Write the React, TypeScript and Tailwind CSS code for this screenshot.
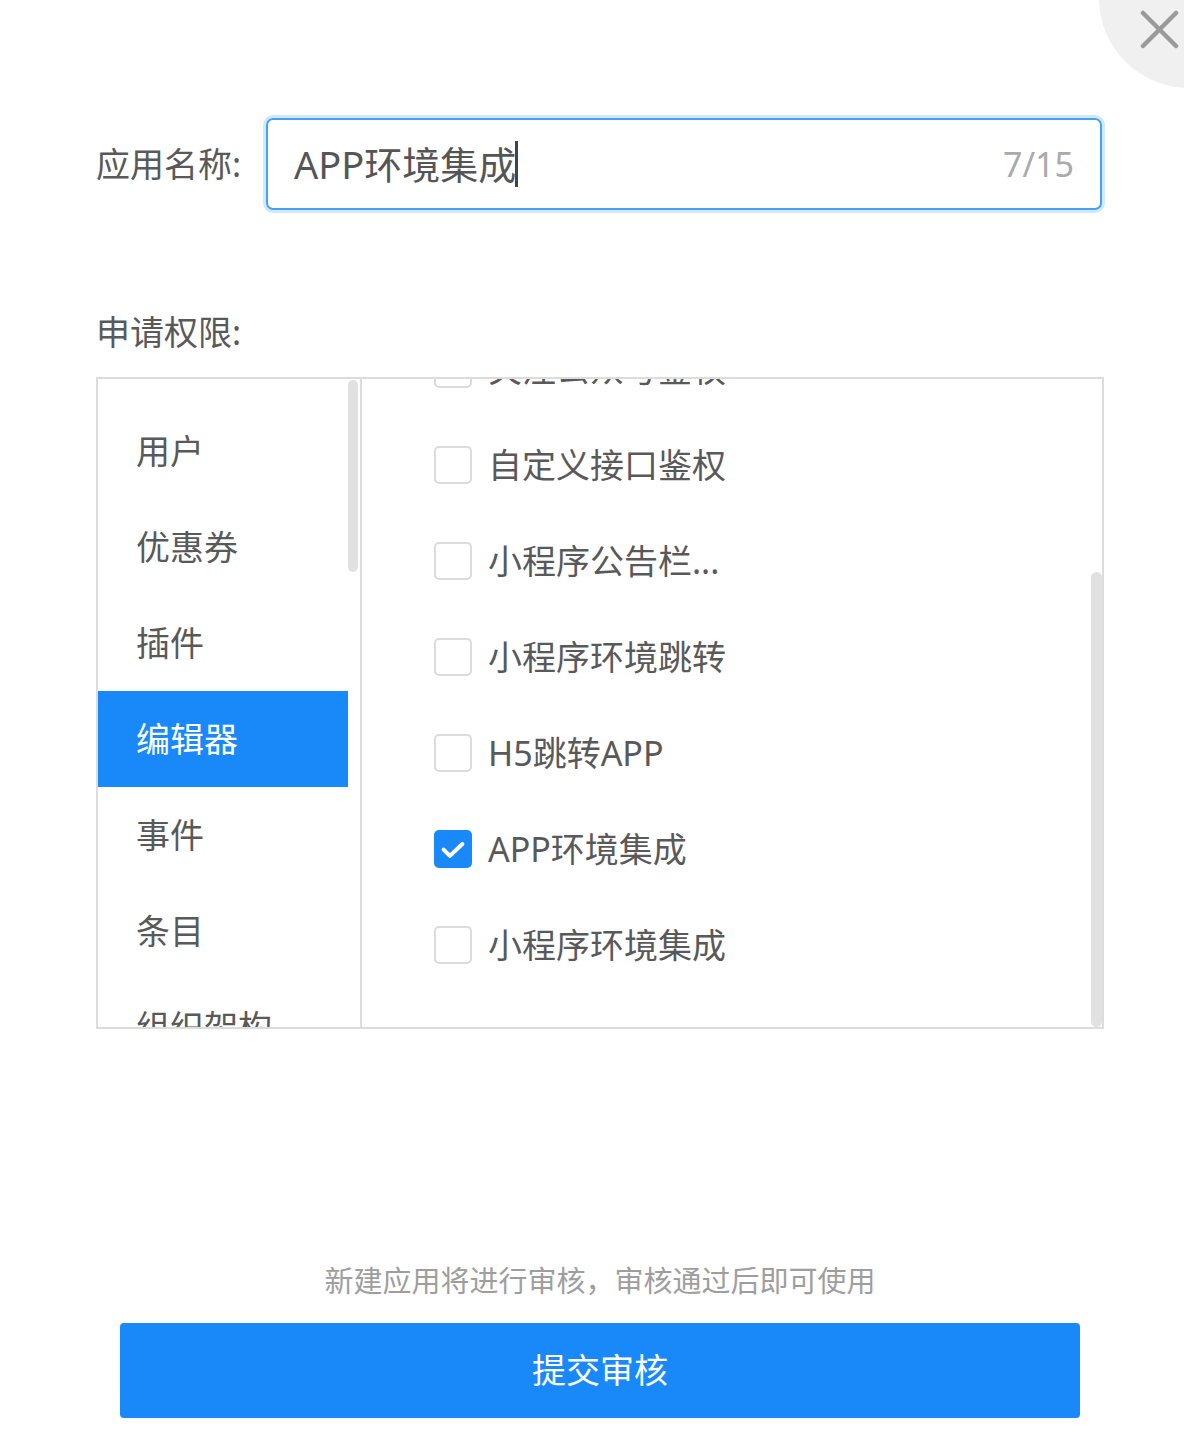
import React from 'react'

const categories = ['用户', '优惠券', '插件', '编辑器', '事件', '条目', '组织架构']

const permissions = [
  { label: '关注公众号鉴权', checked: false },
  { label: '自定义接口鉴权', checked: false },
  { label: '小程序公告栏...', checked: false },
  { label: '小程序环境跳转', checked: false },
  { label: 'H5跳转APP', checked: false },
  { label: 'APP环境集成', checked: true },
  { label: '小程序环境集成', checked: false }
]

function Checkbox({ checked }: { checked: boolean }) {
  if (checked) {
    return (
      <span className="w-[38px] h-[38px] rounded-[5px] bg-[#1989fa] flex items-center justify-center shrink-0">
        <svg width="30" height="30" viewBox="0 0 24 24" fill="none" stroke="white" strokeWidth={3.2} strokeLinecap="round" strokeLinejoin="round">
          <path d="M4.5 12.5l5 5L19.5 8" />
        </svg>
      </span>
    )
  }
  return <span className="w-[38px] h-[38px] rounded-[5px] border-2 border-[#dcdcdc] bg-white shrink-0" />
}

export default function App() {
  return (
    <div
      className="relative w-[1184px] h-[1434px] bg-white overflow-hidden text-[#595959]"
      style={{ fontFamily: '"Noto Sans", "Noto Sans CJK SC", sans-serif' }}
    >
      {/* Close */}
      <div className="absolute -top-[92px] -right-[95px] w-[180px] h-[180px] rounded-full bg-[#f0f0f0]" />
      <button className="absolute top-[10px] left-[1140px] w-[39px] h-[39px] flex items-center justify-center">
        <svg width="39" height="39" viewBox="0 0 39 39" fill="none" stroke="#9a9a9a" strokeWidth={4.5} strokeLinecap="round">
          <path d="M3 3L36 36M36 3L3 36" />
        </svg>
      </button>

      <div className="pl-[96px] pr-[80px] pt-[118px]">
        {/* Name */}
        <div className="flex items-center">
          <label className="w-[170px] shrink-0 text-[34px] leading-[40px]">应用名称:</label>
          <div className="flex-1 mr-[2px] h-[92px] rounded-[7px] border-2 border-[#42a1ff] ring-[3px] ring-[#d1e8ff] flex items-center pl-[26px] pr-[26px]">
            <span className="text-[38px] leading-[44px] text-[#555]">APP环境集成</span>
            <span className="w-[3px] h-[46px] bg-[#444] -ml-[1px]" />
            <span className="ml-auto text-[34px] leading-[40px] text-[#aaaaaa]">7/15</span>
          </div>
        </div>

        {/* Permissions */}
        <div className="mt-[102px] text-[34px] leading-[40px]">申请权限:</div>
        <div className="mt-[25px] h-[652px] border-2 border-[#dcdcdc] flex overflow-hidden">
          <div className="w-[264px] shrink-0 border-r-2 border-[#dcdcdc] flex overflow-hidden">
            <ul className="w-[250px] shrink-0 pt-[24px]">
              {categories.map(c => (
                <li
                  key={c}
                  className={`h-[96px] shrink-0 flex items-center pl-[38px] text-[34px] ${c === '编辑器' ? 'bg-[#1989fa] text-white' : ''}`}
                >
                  {c}
                </li>
              ))}
            </ul>
            <div className="w-[12px] pt-[1px]">
              <div className="w-[10px] h-[192px] rounded-full bg-[#e1e1e1]" />
            </div>
          </div>

          <div className="flex-1 flex overflow-hidden">
            <ul className="flex-1 -mt-[58px] pl-[72px]">
              {permissions.map(p => (
                <li key={p.label} className="h-[96px] flex items-center gap-[16px] text-[34px]">
                  <Checkbox checked={p.checked} />
                  <span>{p.label}</span>
                </li>
              ))}
            </ul>
            <div className="w-[12px] pt-[193px] flex justify-end">
              <div className="w-[11px] h-[455px] rounded-full bg-[#e1e1e1]" />
            </div>
          </div>
        </div>

        {/* Footer */}
        <p className="mt-[232px] text-center text-[29px] leading-[40px] text-[#9e9e9e]">
          新建应用将进行审核，审核通过后即可使用
        </p>
      </div>
      <div className="pl-[120px] pr-[104px] mt-[22px]">
        <button className="w-full h-[95px] rounded-[4px] bg-[#1989fa] text-white text-[34px] flex items-center justify-center">
          提交审核
        </button>
      </div>
    </div>
  )
}
